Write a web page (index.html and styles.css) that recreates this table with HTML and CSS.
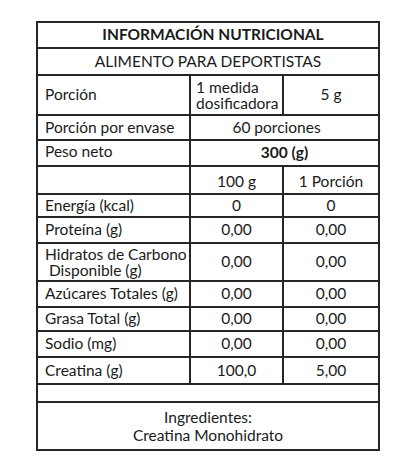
FILE: index.html
```html
<!DOCTYPE html>
<html lang="es">

<head>
    <meta charset="UTF-8">
    <meta name="viewport" content="width=device-width, initial-scale=1.0">
    <title>Información Nutricional</title>
    <link rel="stylesheet" href="styles.css">
</head>

<body>
    <table class="nutri-table">
        <colgroup>
            <col class="col-label">
            <col class="col-100">
            <col class="col-portion">
        </colgroup>
        <tr class="row-title">
            <th colspan="3">INFORMACIÓN NUTRICIONAL</th>
        </tr>
        <tr class="row-sub">
            <td colspan="3" class="center">ALIMENTO PARA DEPORTISTAS</td>
        </tr>
        <tr class="row-porcion">
            <td class="label">Porción</td>
            <td class="medida">1 medida<br>dosificadora</td>
            <td class="center">5 g</td>
        </tr>
        <tr class="row-envase">
            <td class="label">Porción por envase</td>
            <td colspan="2" class="center envase">60 porciones</td>
        </tr>
        <tr class="row-peso">
            <td class="label peso">Peso neto</td>
            <td colspan="2" class="center bold">300 (g)</td>
        </tr>
        <tr class="row-head">
            <td></td>
            <td class="center low">100 g</td>
            <td class="center low">1 Porción</td>
        </tr>
        <tr class="row-energia">
            <td class="label">Energía (kcal)</td>
            <td class="center">0</td>
            <td class="center">0</td>
        </tr>
        <tr class="row-proteina">
            <td class="label">Proteína (g)</td>
            <td class="center">0,00</td>
            <td class="center">0,00</td>
        </tr>
        <tr class="row-hidratos">
            <td class="label two-line">Hidratos de Carbono<br>&nbsp;Disponible (g)</td>
            <td class="center">0,00</td>
            <td class="center">0,00</td>
        </tr>
        <tr class="row-azucares">
            <td class="label">Azúcares Totales (g)</td>
            <td class="center">0,00</td>
            <td class="center">0,00</td>
        </tr>
        <tr class="row-grasa">
            <td class="label">Grasa Total (g)</td>
            <td class="center">0,00</td>
            <td class="center">0,00</td>
        </tr>
        <tr class="row-sodio">
            <td class="label">Sodio (mg)</td>
            <td class="center">0,00</td>
            <td class="center">0,00</td>
        </tr>
        <tr class="row-creatina">
            <td class="label">Creatina (g)</td>
            <td class="center">100,0</td>
            <td class="center">5,00</td>
        </tr>
        <tr class="row-empty">
            <td colspan="3"></td>
        </tr>
        <tr class="row-ingredientes">
            <td colspan="3" class="center ingredientes">Ingredientes:<br>Creatina Monohidrato</td>
        </tr>
    </table>
</body>

</html>
```

FILE: styles.css
```css
* {
    margin: 0;
    padding: 0;
    box-sizing: border-box;
}

body {
    background-color: #fff;
    color: #1a1a1a;
    font-family: Lato, 'Liberation Sans', sans-serif;
    font-size: 15.5px;
    padding-top: 21px;
}

.nutri-table {
    width: 342px;
    margin: 0 auto;
    border-collapse: collapse;
    table-layout: fixed;
}

.col-label {
    width: 153px;
}

.col-100 {
    width: 93px;
}

.col-portion {
    width: 96px;
}

.nutri-table th,
.nutri-table td {
    border: 2px solid #262626;
    padding: 0 4px;
    vertical-align: middle;
    line-height: 1;
    white-space: nowrap;
}

.nutri-table th {
    font-weight: 700;
    font-size: 15.5px;
    text-align: center;
    padding-left: 14px;
}

.label {
    padding-left: 7px !important;
    text-align: left;
}

.center {
    text-align: center;
}

.bold {
    font-weight: 700;
}

.medida {
    text-align: left;
    line-height: 16px !important;
    padding-left: 5px !important;
}

.two-line {
    line-height: 16px !important;
}

.envase {
    padding-right: 20px !important;
}

.peso {
    padding-bottom: 3px !important;
}

.low {
    padding-top: 4px !important;
}

.ingredientes {
    line-height: 18px !important;
}

.row-title { height: 26px; }
.row-sub { height: 27px; }
.row-porcion { height: 40px; }
.row-envase { height: 25px; }
.row-peso { height: 26px; }
.row-head { height: 28px; }
.row-energia { height: 23px; }
.row-proteina { height: 26px; }
.row-hidratos { height: 38px; }
.row-azucares { height: 26px; }
.row-grasa { height: 24px; }
.row-sodio { height: 26px; }
.row-creatina { height: 27px; }
.row-empty { height: 18px; }
.row-ingredientes { height: 48px; }
```
